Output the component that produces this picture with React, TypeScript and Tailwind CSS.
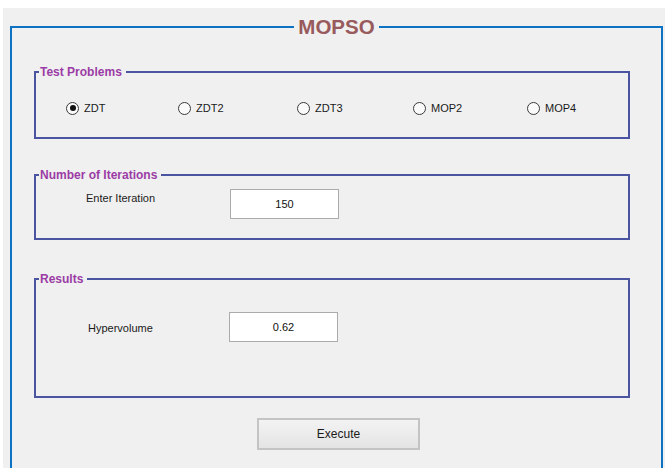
import React from 'react';

const problems = [
  { label: 'ZDT', w: 'w-[112px]' },
  { label: 'ZDT2', w: 'w-[119px]' },
  { label: 'ZDT3', w: 'w-[116px]' },
  { label: 'MOP2', w: 'w-[114px]' },
  { label: 'MOP4', w: 'w-[100px]' },
];

function Radio({ label, checked, width }: { label: string; checked: boolean; width: string }) {
  return (
    <label className={`flex items-center gap-[5px] ${width}`}>
      <span className="w-[13px] h-[13px] rounded-full border border-[#3a3a3a] bg-[#fafafa] flex items-center justify-center shrink-0">
        {checked && <span className="w-[6px] h-[6px] rounded-full bg-[#111]" />}
      </span>
      <span className="text-[11px] leading-[14px] text-[#1a1a1a]">{label}</span>
    </label>
  );
}

function Group({ title, className, children }: { title: string; className: string; children: React.ReactNode }) {
  return (
    <fieldset className={`ml-[22px] w-[596px] border-2 border-[#4a54a0] ${className}`}>
      <legend className="ml-[3px] pl-[1px] pr-[4px] text-[12px] leading-[14px] font-bold text-[#9b3ca6]">
        {title}
      </legend>
      {children}
    </fieldset>
  );
}

export default function App() {
  const [selected, setSelected] = React.useState('ZDT');

  return (
    <div className="bg-white h-[468px] pl-[3px] pt-[8px] overflow-hidden" style={{ fontFamily: '"Liberation Sans", Arial, sans-serif' }}>
      <div className="bg-[#f0f0f0] h-[460px] overflow-hidden">
        <fieldset className="ml-[7px] mr-[2px] mt-[7px] h-[480px] border-2 border-[#0b72c4] pt-[26px]">
          <legend className="mx-auto px-[4px] text-[20.5px] leading-[24px] font-bold text-[#985a5c]">MOPSO</legend>

          {/* problem selector */}
          <Group title="Test Problems" className="h-[74px]">
            <div className="flex pl-[30px] pt-[22px]">
              {problems.map((p) => (
                <div key={p.label} onClick={() => setSelected(p.label)}>
                  <Radio label={p.label} checked={selected === p.label} width={p.w} />
                </div>
              ))}
            </div>
          </Group>

          <Group title="Number of Iterations" className="mt-[29px] h-[72px]">
            <div className="flex items-start pl-[50px] pt-[7px]">
              <span className="w-[144px] mt-[2px] text-[11px] leading-[14px] text-[#1a1a1a]">Enter Iteration</span>
              <div className="w-[109px] h-[30px] bg-white border border-[#ababab] flex items-center justify-center text-[11px] text-[#111]">
                150
              </div>
            </div>
          </Group>

          <Group title="Results" className="mt-[32px] h-[126px]">
            <div className="flex items-center pl-[52px] pt-[26px]">
              <span className="w-[141px] mt-[2px] text-[11px] leading-[14px] text-[#1a1a1a]">Hypervolume</span>
              <div className="w-[109px] h-[30px] bg-white border border-[#ababab] flex items-center justify-center text-[11px] text-[#111]">
                0.62
              </div>
            </div>
          </Group>

          <button className="ml-[245px] mt-[20px] w-[163px] h-[32px] border-2 border-[#c4c4c4] bg-gradient-to-b from-[#f3f3f3] to-[#e4e4e4] text-[12px] text-[#1a1a1a]">
            Execute
          </button>
        </fieldset>
      </div>
    </div>
  );
}
